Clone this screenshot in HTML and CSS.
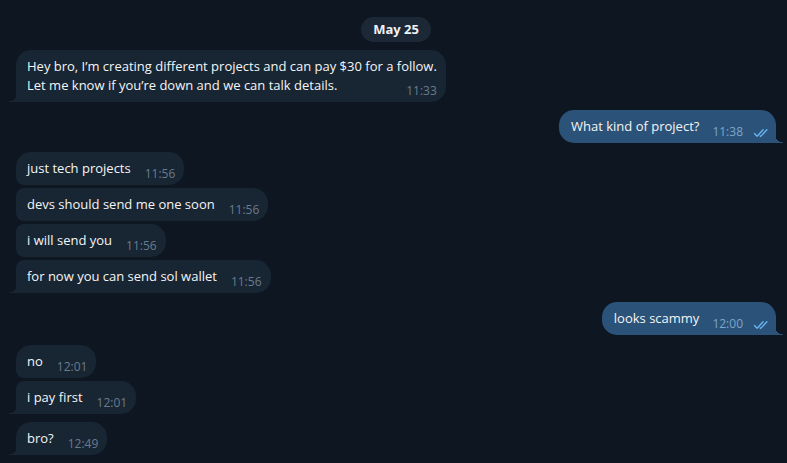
FILE: index.html
```html
<!DOCTYPE html>
<html lang="en">
<head>
<meta charset="utf-8">
<title>Chat</title>
<link rel="stylesheet" href="styles.css">
</head>
<body>
<div class="chat">
  <div class="date"><span class="date-pill">May 25</span></div>

  <div class="group in g-first">
    <div class="bubble last">Hey bro, I’m creating different projects and can pay $30 for a follow.<br>Let me know if you’re down and we can talk details.<span class="meta">11:33</span></div>
  </div>

  <div class="group out g-tight">
    <div class="bubble last">What kind of project?<span class="meta">11:38<svg class="checks" viewBox="0 0 16 10" width="17" height="10"><path d="M1 5.5 L3.6 8.2 L9.6 1.8 M6.6 8 L7.2 8.4 L13.4 1.8" fill="none" stroke="currentColor" stroke-width="1.3" stroke-linecap="round" stroke-linejoin="round"/></svg></span></div>
  </div>

  <div class="group in">
    <div class="bubble">just tech projects<span class="meta">11:56</span></div>
    <div class="bubble">devs should send me one soon<span class="meta">11:56</span></div>
    <div class="bubble">i will send you<span class="meta">11:56</span></div>
    <div class="bubble last">for now you can send sol wallet<span class="meta">11:56</span></div>
  </div>

  <div class="group out">
    <div class="bubble last">looks scammy<span class="meta">12:00<svg class="checks" viewBox="0 0 16 10" width="17" height="10"><path d="M1 5.5 L3.6 8.2 L9.6 1.8 M6.6 8 L7.2 8.4 L13.4 1.8" fill="none" stroke="currentColor" stroke-width="1.3" stroke-linecap="round" stroke-linejoin="round"/></svg></span></div>
  </div>

  <div class="group in g-wide">
    <div class="bubble">no<span class="meta">12:01</span></div>
    <div class="bubble last">i pay first<span class="meta">12:01</span></div>
  </div>

  <div class="group in g-tight">
    <div class="bubble last">bro?<span class="meta">12:49</span></div>
  </div>
</div>
</body>
</html>
```

FILE: styles.css
```css
html, body {
  margin: 0;
  padding: 0;
  background: #0e1621;
  height: 100%;
  overflow: hidden;
}

body {
  font-family: "Open Sans", "Noto Sans", sans-serif;
  font-size: 13px;
  color: #f5f5f5;
}

.chat {
  display: flex;
  flex-direction: column;
  padding: 17px 11px 0 16px;
}

.date {
  display: flex;
  justify-content: center;
}

.date-pill {
  background: #1c2836;
  color: #f0f2f5;
  font-weight: 700;
  font-size: 13px;
  line-height: 25px;
  height: 25px;
  padding: 0 12px;
  border-radius: 13px;
}

.group {
  display: flex;
  flex-direction: column;
  gap: 3px;
  margin-top: 9px;
}

.group.g-first { margin-top: 8px; }
.group.g-tight { margin-top: 8px; }
.group.g-wide { margin-top: 10px; }

.group.in { align-items: flex-start; }
.group.out { align-items: flex-end; }

.bubble {
  position: relative;
  display: block;
  line-height: 19px;
  padding: 7px 9px 7px 11px;
  border-radius: 15px;
  background: #182533;
  white-space: nowrap;
}

.group.in .bubble { border-top-left-radius: 8px; border-bottom-left-radius: 8px; }
.group.in .bubble:first-child { border-top-left-radius: 15px; }

.group.out .bubble {
  background: #2b5278;
  padding: 7px 6px 7px 12px;
}

.meta {
  float: right;
  margin-left: 14px;
  margin-top: 6px;
  margin-bottom: -6px;
  font-size: 12px;
  line-height: 18px;
  height: 18px;
  color: #6b7b8c;
  display: flex;
  align-items: center;
}

.group.out .meta {
  color: #7ea6cc;
  margin-left: 13px;
}

.checks {
  margin-left: 10px;
  color: #6cb7f5;
  margin-top: 1px;
}

.bubble.last::before {
  content: "";
  position: absolute;
  bottom: 0;
  width: 8px;
  height: 9px;
}

.group.in .bubble.last { border-bottom-left-radius: 0; }
.group.in .bubble.last::before {
  left: -7px;
  background: radial-gradient(circle at 0 0, transparent 8px, #182533 8.6px);
}

.group.out .bubble.last { border-bottom-right-radius: 0; }
.group.out .bubble.last::before {
  right: -7px;
  background: radial-gradient(circle at 100% 0, transparent 8px, #2b5278 8.6px);
}
```
